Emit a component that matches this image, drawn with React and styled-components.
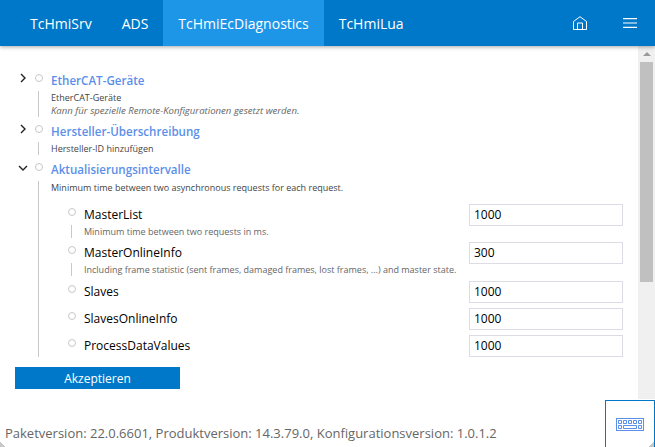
import React from 'react';
import styled, { createGlobalStyle } from 'styled-components';

const GlobalStyle = createGlobalStyle`
  html, body {
    margin: 0;
    padding: 0;
    height: 100%;
    overflow: hidden;
    background: #fff;
  }
  #root {
    height: 100%;
  }
`;

const Page = styled.div`
  height: 447px;
  display: flex;
  flex-direction: column;
  font-family: "Open Sans", sans-serif;
  color: #000;
  position: relative;
  overflow: hidden;
`;

const Header = styled.header`
  height: 46px;
  flex: none;
  display: flex;
  align-items: stretch;
  padding-left: 15px;
  background: #0078c9;
  box-shadow: 0 1px 4px rgba(0, 0, 0, 0.35);
  position: relative;
  z-index: 1;
`;

const Tab = styled.div`
  padding: 0 15px;
  display: flex;
  align-items: center;
  font-size: 14px;
  color: #fff;
  background: ${(p) => (p.$active ? '#1e96e8' : 'transparent')};
`;

const HeaderIcons = styled.div`
  margin-left: auto;
  display: flex;
  align-items: center;
  gap: 36px;
  padding-right: 18px;
`;

const Main = styled.div`
  height: 353px;
  flex: none;
  display: flex;
`;

const Content = styled.div`
  flex: 1;
  padding: 25px 0 0 15px;
`;

const Group = styled.div`
  margin-bottom: ${(p) => p.$gap || 0}px;
`;

const TitleRow = styled.div`
  display: flex;
  align-items: flex-start;
  height: 20px;
`;

const Toggle = styled.div`
  width: 16px;
  height: 14px;
  margin-right: 4px;
  display: flex;
  align-items: center;
  justify-content: center;
  color: #222;
`;

const Dot = styled.span`
  width: 6px;
  height: 6px;
  flex: none;
  margin-top: ${(p) => p.$top || 0}px;
  border: 1px solid #c8c8c8;
  border-radius: 50%;
  background: #fff;
`;

const GroupTitle = styled.div`
  margin-left: 8px;
  margin-top: ${(p) => p.$top ?? 1}px;
  font-size: 11.6px;
  font-weight: 600;
  color: #5b8fe8;
  line-height: 18px;
  white-space: nowrap;
`;

const Body = styled.div`
  margin-left: 23px;
  padding: 0 0 0 12px;
  border-left: 1px solid #c8c8c8;
`;

const Desc = styled.div`
  font-size: ${(p) => (p.$italic ? 9.6 : 9)}px;
  line-height: 13px;
  color: ${(p) => (p.$muted ? '#666' : '#444')};
  font-style: ${(p) => (p.$italic ? 'italic' : 'normal')};
`;

const Params = styled.div`
  margin-top: 14px;
`;

const Param = styled.div`
  display: flex;
  justify-content: space-between;
  height: ${(p) => p.$height}px;
  padding-right: 15px;
`;

const ParamLeft = styled.div`
  margin-left: 17px;
`;

const ParamHead = styled.div`
  display: flex;
  align-items: flex-start;
`;

const ParamName = styled.div`
  margin-left: 8px;
  margin-top: -2px;
  font-size: 12px;
  line-height: 18px;
`;

const ParamDesc = styled.div`
  margin: 1px 0 0 3px;
  padding-left: 12px;
  border-left: 1px solid #c8c8c8;
  font-size: 9px;
  line-height: 13px;
  color: #666;
  white-space: nowrap;
`;

const Input = styled.div`
  width: 148px;
  height: 20px;
  margin-top: -4px;
  padding-left: 4px;
  border: 1px solid #dcdce6;
  font-size: 12px;
  line-height: 20px;
  background: #fff;
`;

const AcceptButton = styled.button`
  display: block;
  width: 165px;
  height: 22px;
  margin-top: 10px;
  padding: 0;
  border: none;
  background: #0078c9;
  color: #fff;
  font-family: inherit;
  font-size: 12px;
  text-align: center;
`;

const Track = styled.div`
  width: 17px;
  flex: none;
  padding: 16px 2px 0;
  box-sizing: border-box;
  background: #f0f0f0;
  position: relative;
`;

const Arrow = styled.span`
  position: absolute;
  top: 6px;
  left: 5px;
  width: 0;
  height: 0;
  border-left: 4px solid transparent;
  border-right: 4px solid transparent;
  border-bottom: 4px solid #9a9a9a;
`;

const Thumb = styled.div`
  width: 13px;
  height: 220px;
  background: #c0c0c0;
`;

const Footer = styled.div`
  flex: 1;
  display: flex;
  align-items: center;
  padding: 20px 0 0 5px;
  font-size: 13px;
  color: #666;
`;

const KeyboardButton = styled.div`
  position: absolute;
  right: 0;
  bottom: 0;
  width: 48px;
  height: 46px;
  display: flex;
  align-items: center;
  justify-content: center;
  border: 1px solid #0078c9;
  border-bottom: none;
  background: #fff;
`;

const CornerMark = styled.span`
  position: absolute;
  bottom: 0;
  ${(p) => (p.$side === 'left' ? 'left: 0;' : 'right: 0;')}
  width: 5px;
  height: 5px;
  background: linear-gradient(
    ${(p) => (p.$side === 'left' ? 'to top right' : 'to top left')},
    #c8c8c8 50%,
    transparent 50%
  );
`;

const HomeIcon = () => (
  <svg width="14" height="14" viewBox="0 0 14 14" fill="none" stroke="#fff" strokeWidth="1">
    <path d="M0.500 13.500V5.500L7 0.700L13.500 5.500V13.500Z" />
    <path d="M4.500 13.500V7H9.500V13.500" />
  </svg>
);

const MenuIcon = () => (
  <svg width="14" height="10" viewBox="0 0 14 10" stroke="#fff" strokeWidth="1.200">
    <path d="M0 0.700H14M0 5H14M0 9.300H14" />
  </svg>
);

const Chevron = ({ open }) => (
  <svg width="10" height="10" viewBox="0 0 10 10" fill="none" stroke="currentColor" strokeWidth="1.400">
    <path d={open ? 'M1 3L5 7L9 3' : 'M3 1L7 5L3 9'} />
  </svg>
);

const KeyboardIcon = () => (
  <svg width="28" height="13" viewBox="0 0 28 13" fill="none" stroke="#5b8fe8" strokeWidth="1">
    <rect x="0.500" y="0.500" width="27" height="12" />
    <path d="M2.500 2.500h3v3h-3zM7.500 2.500h3v3h-3zM12.500 2.500h3v3h-3zM17.500 2.500h3v3h-3zM22.500 2.500h3v3h-3zM2.500 7.500h3v3h-3zM7.500 7.500h13v3h-13zM22.500 7.500h3v3h-3z" />
  </svg>
);

const tabs = ['TcHmiSrv', 'ADS', 'TcHmiEcDiagnostics', 'TcHmiLua'];

const params = [
  { name: 'MasterList', value: '1000', height: 38, desc: 'Minimum time between two requests in ms.' },
  {
    name: 'MasterOnlineInfo',
    value: '300',
    height: 39,
    desc: 'Including frame statistic (sent frames, damaged frames, lost frames, ...) and master state.',
  },
  { name: 'Slaves', value: '1000', height: 27 },
  { name: 'SlavesOnlineInfo', value: '1000', height: 27 },
  { name: 'ProcessDataValues', value: '1000', height: 18 },
];

const App = () => (
  <Page>
    <GlobalStyle />
    <Header>
      {tabs.map((tab) => (
        <Tab key={tab} $active={tab === 'TcHmiEcDiagnostics'}>{tab}</Tab>
      ))}
      <HeaderIcons>
        <HomeIcon />
        <MenuIcon />
      </HeaderIcons>
    </Header>
    <Main>
      <Content>
        <Group $gap={5}>
          <TitleRow>
            <Toggle><Chevron /></Toggle>
            <Dot $top={3} />
            <GroupTitle>EtherCAT-Geräte</GroupTitle>
          </TitleRow>
          <Body>
            <Desc>EtherCAT-Geräte</Desc>
            <Desc $italic $muted>Kann für spezielle Remote-Konfigurationen gesetzt werden.</Desc>
          </Body>
        </Group>
        <Group $gap={6}>
          <TitleRow>
            <Toggle><Chevron /></Toggle>
            <Dot $top={3} />
            <GroupTitle>Hersteller-Überschreibung</GroupTitle>
          </TitleRow>
          <Body>
            <Desc>Hersteller-ID hinzufügen</Desc>
          </Body>
        </Group>
        <Group>
          <TitleRow>
            <Toggle><Chevron open /></Toggle>
            <Dot $top={2} />
            <GroupTitle $top={0}>Aktualisierungsintervalle</GroupTitle>
          </TitleRow>
          <Body>
            <Desc>Minimum time between two asynchronous requests for each request.</Desc>
            <Params>
              {params.map((p) => (
                <Param key={p.name} $height={p.height}>
                  <ParamLeft>
                    <ParamHead>
                      <Dot />
                      <ParamName>{p.name}</ParamName>
                    </ParamHead>
                    {p.desc && <ParamDesc>{p.desc}</ParamDesc>}
                  </ParamLeft>
                  <Input>{p.value}</Input>
                </Param>
              ))}
            </Params>
          </Body>
        </Group>
        <AcceptButton>Akzeptieren</AcceptButton>
      </Content>
      <Track>
        <Arrow />
        <Thumb />
      </Track>
    </Main>
    <Footer>Paketversion: 22.0.6601, Produktversion: 14.3.79.0, Konfigurationsversion: 1.0.1.2</Footer>
    <KeyboardButton>
      <KeyboardIcon />
      <CornerMark $side="right" />
    </KeyboardButton>
    <CornerMark $side="left" />
  </Page>
);

export default App;
